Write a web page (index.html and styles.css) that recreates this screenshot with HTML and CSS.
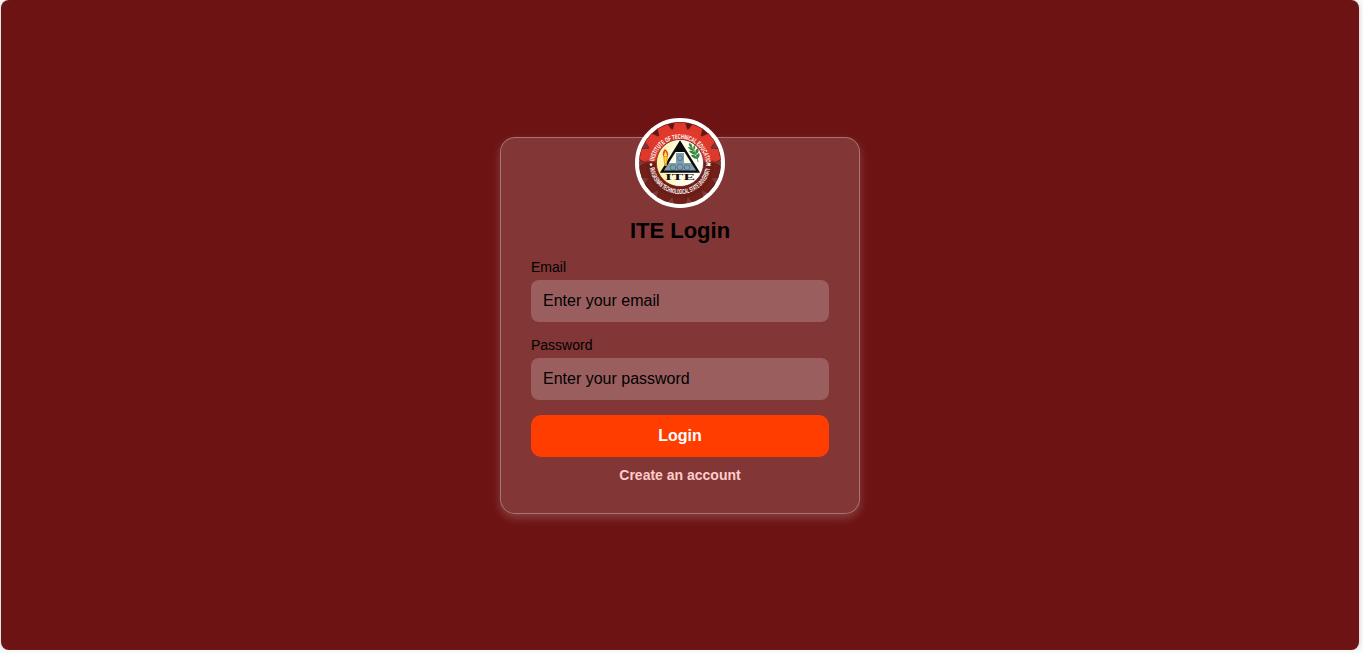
FILE: index.html
```html
<!DOCTYPE html>
<html lang="en">
<head>
<meta charset="utf-8">
<title>ITE Login</title>
<link rel="stylesheet" href="styles.css">
</head>
<body>
<main class="page">
  <form class="card">
    <svg class="logo" viewBox="-41 -41 82 82" role="img" aria-label="ITE">
      <defs>
        <linearGradient id="gear" x1="0" y1="-41" x2="0" y2="41" gradientUnits="userSpaceOnUse">
          <stop offset="0" stop-color="#e5392c"/>
          <stop offset=".46" stop-color="#d93a2d"/>
          <stop offset=".5" stop-color="#6f1d17"/>
          <stop offset="1" stop-color="#6a1c15"/>
        </linearGradient>
        <linearGradient id="cream" x1="0" x2="1">
          <stop offset="0" stop-color="#fff0a0"/>
          <stop offset=".5" stop-color="#fffbe6"/>
          <stop offset="1" stop-color="#ffffff"/>
        </linearGradient>
        <path id="arcTop" d="M-26 2A26 26 0 1 1 26 2"/>
        <path id="arcBottom" d="M-30.4 4A30.6 30.6 0 0 0 30.4 4"/>
        <path id="tooth" d="M-7.5 -33L-5.6 -40.7H5.6L7.5 -33Z"/>
      </defs>
      <g stroke="#5b1a14" stroke-width=".6">
        <g fill="#df392c">
          <use href="#tooth"/><use href="#tooth" transform="rotate(25.714)"/><use href="#tooth" transform="rotate(51.429)"/><use href="#tooth" transform="rotate(77.143)"/><use href="#tooth" transform="rotate(-25.714)"/><use href="#tooth" transform="rotate(-51.429)"/><use href="#tooth" transform="rotate(-77.143)"/>
        </g>
        <g fill="#702019">
          <use href="#tooth" transform="rotate(102.857)"/><use href="#tooth" transform="rotate(128.571)"/><use href="#tooth" transform="rotate(154.286)"/><use href="#tooth" transform="rotate(180)"/><use href="#tooth" transform="rotate(205.714)"/><use href="#tooth" transform="rotate(231.429)"/><use href="#tooth" transform="rotate(257.143)"/>
        </g>
      </g>
      <circle r="34.5" fill="url(#gear)"/>
      <text class="ring"><textPath href="#arcTop" startOffset="4" textLength="78" lengthAdjust="spacingAndGlyphs">INSTITUTE OF TECHNICAL EDUCATION</textPath></text>
      <text class="ring"><textPath href="#arcBottom" startOffset="1" textLength="86" lengthAdjust="spacingAndGlyphs">PANGASINAN TECHNOLOGICAL STATE UNIVERSITY</textPath></text>
      <circle class="dot" cx="-29" cy="1.6" r="1.3"/>
      <circle class="dot" cx="29" cy="1.6" r="1.3"/>
      <circle r="23.6" fill="url(#cream)" stroke="#7a251b" stroke-width=".8"/>
      <path fill="#fffbe6" d="M0-20L18 9H-18Z"/>
      <path fill="#7f9fb0" d="M-4-10H4V0H12L16 8.6H-16L-12 0H-4Z"/>
      <g fill="none" stroke="#41657a" stroke-width=".7">
        <circle cx="-7" cy="4.5" r="2.8"/><circle cy="4" r="3"/><circle cx="7" cy="4.5" r="2.8"/><circle cy="-5" r="2.5"/>
      </g>
      <path fill="none" stroke="#0c0c0c" stroke-width="2.4" d="M0-20.5L18 8.6H-18Z"/>
      <path fill="#0c0c0c" d="M0-22L5.6-11H-5.6Z"/>
      <path fill="#ef9b20" d="M-17-7H-12L-13.4 3H-15.4Z"/>
      <path fill="#e34928" d="M-15-14Q-11-11-12-7H-17Q-18-11-15-14Z"/>
      <path fill="#ffe73c" d="M-14.5-12L-12.6-7H-16.4ZM-15.4-6H-13.6L-14 0H-15Z"/>
      <g fill="#36883d">
        <path d="M10-18Q17-11 18-1" fill="none" stroke="#236b2b" stroke-width=".7"/>
        <path d="M12-15Q8-17 9-20Q13-19 12-15M14-12Q9-13 8-16Q13-16 14-12M16-8Q11-9 9-12Q15-13 16-8M17-4Q12-5 11-8Q16-9 17-4M14-13Q16-15 15-18Q12-17 14-13M16-9Q20-11 18-15Q14-13 16-9M17-4Q21-7 19-10Q15-8 17-4"/>
      </g>
      <text class="initials" x="0" y="17" text-anchor="middle" textLength="30" lengthAdjust="spacingAndGlyphs">ITE</text>
    </svg>
    <h1 class="title">ITE Login</h1>
    <label class="label" for="email">Email</label>
    <input class="field" id="email" type="email" placeholder="Enter your email">
    <label class="label" for="password">Password</label>
    <input class="field" id="password" type="password" placeholder="Enter your password">
    <button class="submit" type="button">Login</button>
    <a class="signup" href="#">Create an account</a>
  </form>
</main>
</body>
</html>
```
FILE: styles.css
```css
* { box-sizing: border-box; }
body {
  margin: 0;
  background: #f9f9f9;
  font-family: "Liberation Sans", Arial, sans-serif;
}
.page {
  display: flex;
  justify-content: center;
  align-items: center;
  width: 1358px;
  height: 650px;
  margin-left: 1px;
  border-radius: 8px;
  background: #6d1313;
  box-shadow: 0 1px 4px rgba(0, 0, 0, .2);
}
.card {
  display: flex;
  flex-direction: column;
  width: 360px;
  height: 377px;
  padding: 0 30px;
  border: 1px solid rgba(255, 255, 255, .3);
  border-radius: 15px;
  background: rgba(255, 255, 255, .15);
  box-shadow: 0 4px 10px rgba(255, 255, 255, .2);
}
.logo {
  flex: none;
  align-self: center;
  width: 90px;
  height: 90px;
  margin-top: -20px;
  border: 4px solid #fff;
  border-radius: 50%;
}
.ring {
  fill: #fff;
  font: bold 7px "Liberation Sans", Arial, sans-serif;
}
.dot { fill: #fff; }
.initials {
  fill: #111;
  font: bold 9px "Liberation Serif", serif;
}
.title {
  margin: 10px 0 16px;
  font-size: 22px;
  line-height: 25px;
  text-align: center;
}
.label {
  margin-bottom: 5px;
  font-size: 14px;
  line-height: 16px;
}
.field {
  width: 100%;
  height: 42px;
  margin: 0 0 15px;
  padding: 12px;
  border: 0;
  border-radius: 8px;
  background: rgba(255, 255, 255, .2);
  color: #000;
  font: 16px "Liberation Sans", Arial, sans-serif;
}
.field::placeholder { color: #000; }
.submit {
  height: 42px;
  border: 0;
  border-radius: 10px;
  background: #ff3d00;
  color: #fff;
  font: bold 16px "Liberation Sans", Arial, sans-serif;
}
.signup {
  margin-top: 10px;
  color: #ffcccb;
  font-size: 14px;
  font-weight: bold;
  line-height: 16px;
  text-align: center;
  text-decoration: none;
}
```
